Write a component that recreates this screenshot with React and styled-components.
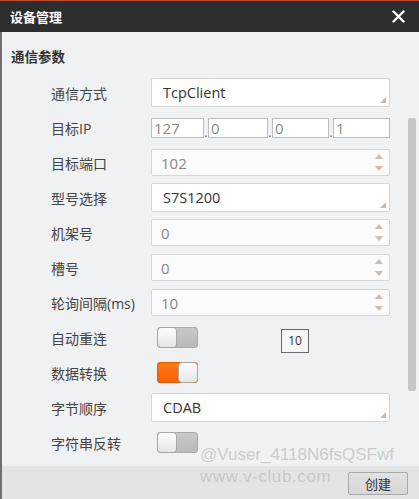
import { createGlobalStyle, styled } from "styled-components";

const GlobalStyle = createGlobalStyle`
	html, body {
		margin: 0;
		padding: 0;
		background: #f0f1f3;
	}
	* {
		box-sizing: border-box;
	}
`;

const FONT = `"Open Sans", "Noto Sans CJK SC", "Noto Sans", sans-serif`;

const Window = styled.div`
	position: relative;
	width: 419px;
	height: 499px;
	display: flex;
	flex-direction: column;
	overflow: hidden;
	font-family: ${FONT};
	background: #f0f1f3;
`;

const TitleBar = styled.div`
	height: 32px;
	flex: none;
	display: flex;
	align-items: center;
	justify-content: space-between;
	padding: 0 14px 0 10px;
	background: #2e2e2e;
	border-top: 1px solid #c24a2c;
	color: #fff;
	font-size: 13px;
	font-weight: 700;
`;

const Body = styled.div`
	flex: 1;
	display: flex;
	min-height: 0;
	border-left: 2px solid #707070;
`;

const Form = styled.div`
	flex: 1;
	padding-top: 14px;
`;

const SectionTitle = styled.div`
	height: 22px;
	line-height: 22px;
	padding-left: 9px;
	margin-bottom: 7px;
	font-size: 13.5px;
	font-weight: 700;
	color: #333;
`;

const Row = styled.div`
	height: 35px;
	display: grid;
	grid-template-columns: 100px 239px;
	align-items: center;
	padding-left: 49px;
`;

const Label = styled.div`
	font-size: 14px;
	color: #444;
	white-space: nowrap;
`;

const Field = styled.div`
	position: relative;
	height: ${(p) => (p.$tall ? 29 : 27)}px;
	display: flex;
	align-items: center;
	padding-left: ${(p) => (p.$tall ? 11 : 9)}px;
	background: ${(p) => (p.$tall ? "#fff" : "#fbfbfb")};
	border: 1px solid #d6d6d6;
	border-radius: 2px;
	font-size: ${(p) => (p.$tall ? 14.5 : 15)}px;
	color: ${(p) => (p.$tall ? "#333" : "#888")};
`;

const Grip = styled.span`
	position: absolute;
	right: 3px;
	bottom: 3px;
	width: 0;
	height: 0;
	border-left: 6px solid transparent;
	border-bottom: 6px solid #cbb8a6;
`;

const Spin = styled.span`
	position: absolute;
	right: 6px;
	top: 4px;
	bottom: 4px;
	display: flex;
	flex-direction: column;
	justify-content: space-between;
	align-items: center;
`;

const Arrow = styled.span`
	width: 0;
	height: 0;
	border-left: 4px solid transparent;
	border-right: 4px solid transparent;
	${(p) =>
		p.$down
			? "border-top: 5px solid #cdbdb4;"
			: "border-bottom: 5px solid #cdbdb4;"}
`;

const IpGroup = styled.div`
	display: flex;
	align-items: flex-end;
	height: 20px;
`;

const IpBox = styled.div`
	width: ${(p) => p.$w}px;
	height: 20px;
	padding-left: 2px;
	line-height: 18px;
	background: #fff;
	border: 1px solid #bcbcbc;
	font-size: 15px;
	color: #888;
`;

const IpDot = styled.span`
	width: 4px;
	text-align: center;
	font-size: 12px;
	line-height: 10px;
	color: #666;
`;

const Toggle = styled.div`
	width: 41px;
	height: 21px;
	margin-left: 6px;
	display: flex;
	flex-direction: ${(p) => (p.$on ? "row-reverse" : "row")};
	border-radius: 4px;
	overflow: hidden;
	background: ${(p) =>
		p.$on
			? "linear-gradient(#ff7a1a, #f55f00)"
			: "linear-gradient(#c9c9c9, #b9b9b9)"};
	box-shadow: inset 0 0 0 1px ${(p) => (p.$on ? "#e05a00" : "#aaa")};
`;

const Knob = styled.div`
	width: 20px;
	height: 21px;
	border-radius: 4px;
	background: linear-gradient(#fdfdfd, #e6e6e6);
	border: 1px solid #a8a8a8;
`;

const ToggleCell = styled.div`
	display: flex;
	align-items: center;
`;

const CountBox = styled.div`
	width: 28px;
	height: 24px;
	margin-left: 83px;
	margin-top: 6px;
	display: flex;
	align-items: center;
	justify-content: center;
	border: 1px solid #6a6a6a;
	background: #f6f6f6;
	font-size: 12px;
	color: #333;
`;

const ScrollTrack = styled.div`
	width: 14px;
	flex: none;
	padding: 86px 3px 0 3px;
`;

const Thumb = styled.div`
	width: 8px;
	height: 273px;
	border-radius: 2px;
	background: #c6c6c6;
`;

const Footer = styled.div`
	height: 33px;
	flex: none;
	display: flex;
	align-items: center;
	justify-content: flex-end;
	padding-right: 11px;
	background: #e4e4e4;
	border-left: 2px solid #707070;
`;

const CreateButton = styled.button`
	width: 60px;
	height: 23px;
	margin-top: 2px;
	padding: 0;
	font-family: ${FONT};
	font-size: 13px;
	color: #333;
	background: linear-gradient(#e2e2e2, #d6d6d6);
	border: 1px solid #a9a9a9;
	border-radius: 2px;
`;

const Watermark = styled.div`
	position: absolute;
	left: 200px;
	top: 444px;
	display: flex;
	flex-direction: column;
	font-family: "Liberation Sans", Arial, sans-serif;
	font-size: 17px;
	line-height: 22px;
	color: rgba(190, 190, 190, 0.75);
	pointer-events: none;
`;

const WatermarkSite = styled.span`
	letter-spacing: 0.6px;
`;

function CloseIcon() {
	return (
		<svg width="13" height="13" viewBox="0 0 13 13">
			<path d="M1.5 1.5 L11.5 11.5 M11.5 1.5 L1.5 11.5" stroke="#fff" strokeWidth="2.4" strokeLinecap="round" />
		</svg>
	);
}

function SelectField({ value }) {
	return (
		<Field $tall>
			{value}
			<Grip />
		</Field>
	);
}

function SpinField({ value }) {
	return (
		<Field>
			{value}
			<Spin>
				<Arrow />
				<Arrow $down />
			</Spin>
		</Field>
	);
}

export default function App() {
	return (
		<>
			<GlobalStyle />
			<Window>
				<TitleBar>
					<span>设备管理</span>
					<CloseIcon />
				</TitleBar>
				<Body>
					<Form>
						<SectionTitle>通信参数</SectionTitle>
						<Row>
							<Label>通信方式</Label>
							<SelectField value="TcpClient" />
						</Row>
						<Row>
							<Label>目标IP</Label>
							<IpGroup>
								<IpBox $w={53}>127</IpBox>
								<IpDot>.</IpDot>
								<IpBox $w={60}>0</IpBox>
								<IpDot>.</IpDot>
								<IpBox $w={57}>0</IpBox>
								<IpDot>.</IpDot>
								<IpBox $w={57}>1</IpBox>
							</IpGroup>
						</Row>
						<Row>
							<Label>目标端口</Label>
							<SpinField value="102" />
						</Row>
						<Row>
							<Label>型号选择</Label>
							<SelectField value="S7S1200" />
						</Row>
						<Row>
							<Label>机架号</Label>
							<SpinField value="0" />
						</Row>
						<Row>
							<Label>槽号</Label>
							<SpinField value="0" />
						</Row>
						<Row>
							<Label>轮询间隔(ms)</Label>
							<SpinField value="10" />
						</Row>
						<Row>
							<Label>自动重连</Label>
							<ToggleCell>
								<Toggle>
									<Knob />
								</Toggle>
								<CountBox>10</CountBox>
							</ToggleCell>
						</Row>
						<Row>
							<Label>数据转换</Label>
							<ToggleCell>
								<Toggle $on>
									<Knob />
								</Toggle>
							</ToggleCell>
						</Row>
						<Row>
							<Label>字节顺序</Label>
							<SelectField value="CDAB" />
						</Row>
						<Row>
							<Label>字符串反转</Label>
							<ToggleCell>
								<Toggle>
									<Knob />
								</Toggle>
							</ToggleCell>
						</Row>
					</Form>
					<ScrollTrack>
						<Thumb />
					</ScrollTrack>
				</Body>
				<Footer>
					<CreateButton>创建</CreateButton>
				</Footer>
				<Watermark>
					<span>@Vuser_4118N6fsQSFwf</span>
					<WatermarkSite>www.v-club.com</WatermarkSite>
				</Watermark>
			</Window>
		</>
	);
}
